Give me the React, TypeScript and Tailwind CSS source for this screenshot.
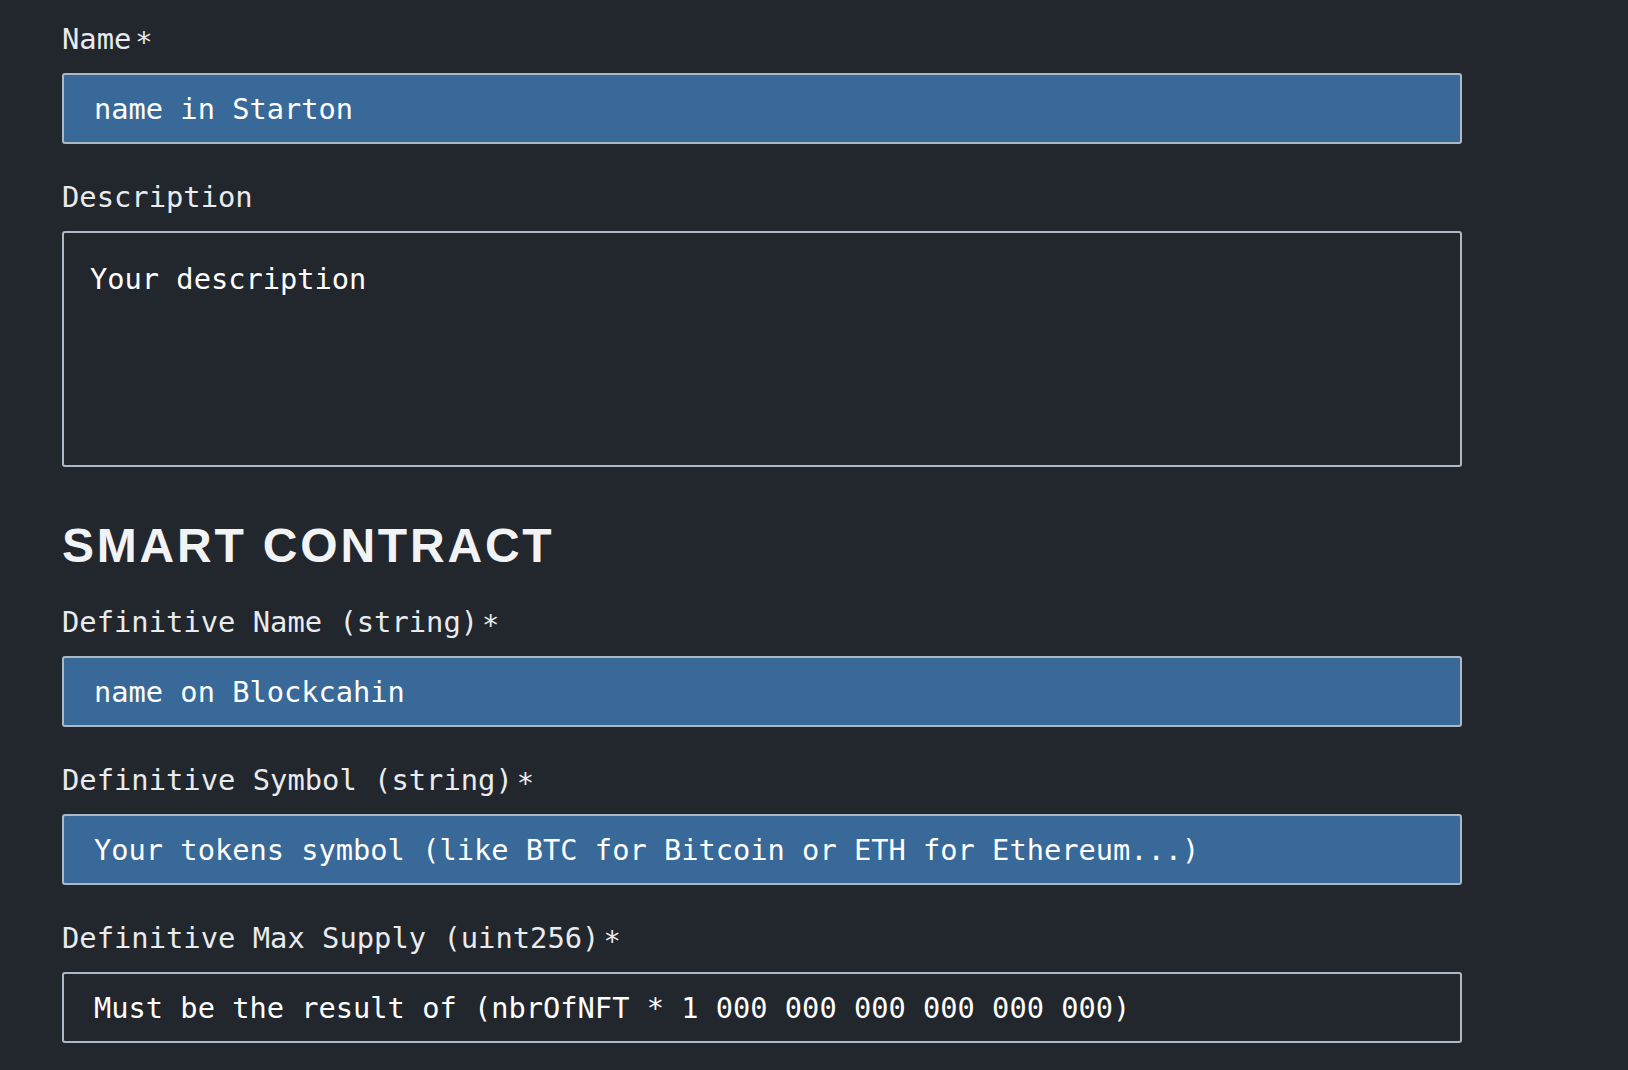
const mono = "font-['DejaVu_Sans_Mono','Liberation_Mono',monospace]";

const Label = ({ text, required }: { text: string; required?: boolean }) => (
  <div className={`${mono} h-[34px] leading-[34px] text-[28.8px] text-[#e9ebee] mt-[1px] mb-[17px] whitespace-pre`}>
    {text}
    {required && <span className="ml-[4px] inline-block translate-y-[3px]">*</span>}
  </div>
);

const Field = ({
  label,
  value,
  required,
  filled,
  className = "",
}: {
  label: string;
  value: string;
  required?: boolean;
  filled?: boolean;
  className?: string;
}) => (
  <div className={`flex flex-col ${className}`}>
    <Label text={label} required={required} />
    <div
      className={`${mono} h-[71px] w-[1400px] flex items-center pl-[30px] rounded-[3px] border-2 border-[#adb8c4] text-[28.7px] leading-[34px] text-white whitespace-pre ${
        filled ? "bg-[#386999]" : "bg-[#22262d]"
      }`}
    >
      {value}
    </div>
  </div>
);

export default function App() {
  return (
    <div className="min-h-screen w-full bg-[#22262d] pl-[62px] pt-[21px]">
      {/* general info */}
      <Field label="Name" value="name in Starton" required filled />

      <div className="flex flex-col mt-[35px]">
        <Label text="Description" />
        <div
          className={`${mono} h-[236px] w-[1400px] pl-[26px] pt-[29px] rounded-[3px] border-2 border-[#adb8c4] text-[28.7px] leading-[34px] text-white whitespace-pre`}
        >
          Your description
        </div>
      </div>

      {/* contract section */}
      <h2 className="mt-[55px] font-['Liberation_Sans',Arial,sans-serif] font-bold text-[48px] leading-[48px] tracking-[2.8px] text-[#f1f3f5]">
        SMART CONTRACT
      </h2>

      <Field className="mt-[34px]" label="Definitive Name (string)" value="name on Blockcahin" required filled />
      <Field
        className="mt-[35px]"
        label="Definitive Symbol (string)"
        value="Your tokens symbol (like BTC for Bitcoin or ETH for Ethereum...)"
        required
        filled
      />
      <Field
        className="mt-[35px]"
        label="Definitive Max Supply (uint256)"
        value="Must be the result of (nbrOfNFT * 1 000 000 000 000 000 000)"
        required
      />
    </div>
  );
}
